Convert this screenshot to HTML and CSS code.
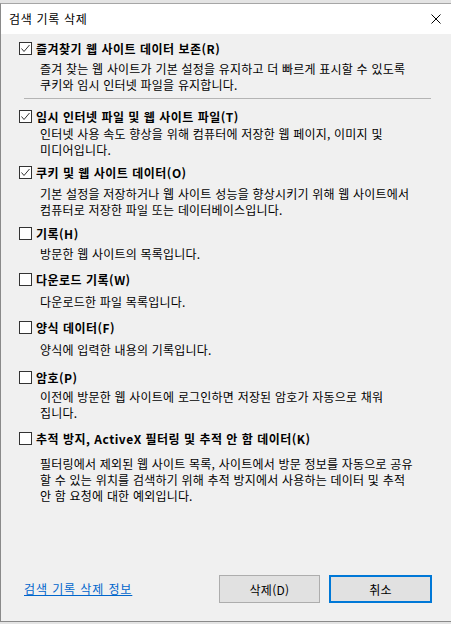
FILE: index.html
```html
<!DOCTYPE html>
<html lang="ko">
<head>
<meta charset="utf-8">
<title>검색 기록 삭제</title>
<link rel="stylesheet" href="styles.css">
</head>
<body>
<div class="window">
  <div class="titlebar">
    <span class="title">검색 기록 삭제</span>
    <svg class="close" width="10" height="10" viewBox="0 0 10 10"><path d="M0.5 0.5L9.5 9.5M9.5 0.5L0.5 9.5" stroke="#000" stroke-width="1"/></svg>
  </div>
  <div class="content">
    <div class="option o1">
      <div class="row">
        <span class="box"><svg width="11" height="11" viewBox="0 0 11 11"><polyline points="1.5,5.5 4,8.5 9.5,2" fill="none" stroke="#333" stroke-width="1"/></svg></span>
        <span class="label">즐겨찾기 웹 사이트 데이터 보존(R)</span>
      </div>
      <p class="desc d1">즐겨 찾는 웹 사이트가 기본 설정을 유지하고 더 빠르게 표시할 수 있도록<br>쿠키와 임시 인터넷 파일을 유지합니다.</p>
    </div>
    <div class="sep"></div>
    <div class="option o2">
      <div class="row">
        <span class="box"><svg width="11" height="11" viewBox="0 0 11 11"><polyline points="1.5,5.5 4,8.5 9.5,2" fill="none" stroke="#333" stroke-width="1"/></svg></span>
        <span class="label">임시 인터넷 파일 및 웹 사이트 파일(T)</span>
      </div>
      <p class="desc d2">인터넷 사용 속도 향상을 위해 컴퓨터에 저장한 웹 페이지, 이미지 및<br>미디어입니다.</p>
    </div>
    <div class="option o3">
      <div class="row">
        <span class="box"><svg width="11" height="11" viewBox="0 0 11 11"><polyline points="1.5,5.5 4,8.5 9.5,2" fill="none" stroke="#333" stroke-width="1"/></svg></span>
        <span class="label">쿠키 및 웹 사이트 데이터(O)</span>
      </div>
      <p class="desc d3">기본 설정을 저장하거나 웹 사이트 성능을 향상시키기 위해 웹 사이트에서<br>컴퓨터로 저장한 파일 또는 데이터베이스입니다.</p>
    </div>
    <div class="option o4">
      <div class="row">
        <span class="box"></span>
        <span class="label">기록(H)</span>
      </div>
      <p class="desc d4">방문한 웹 사이트의 목록입니다.</p>
    </div>
    <div class="option o5">
      <div class="row">
        <span class="box"></span>
        <span class="label">다운로드 기록(W)</span>
      </div>
      <p class="desc d5">다운로드한 파일 목록입니다.</p>
    </div>
    <div class="option o6">
      <div class="row">
        <span class="box"></span>
        <span class="label">양식 데이터(F)</span>
      </div>
      <p class="desc d6">양식에 입력한 내용의 기록입니다.</p>
    </div>
    <div class="option o7">
      <div class="row">
        <span class="box"></span>
        <span class="label">암호(P)</span>
      </div>
      <p class="desc d7">이전에 방문한 웹 사이트에 로그인하면 저장된 암호가 자동으로 채워<br>집니다.</p>
    </div>
    <div class="option o8">
      <div class="row">
        <span class="box"></span>
        <span class="label">추적 방지, ActiveX 필터링 및 추적 안 함 데이터(K)</span>
      </div>
      <p class="desc d8">필터링에서 제외된 웹 사이트 목록, 사이트에서 방문 정보를 자동으로 공유<br>할 수 있는 위치를 검색하기 위해 추적 방지에서 사용하는 데이터 및 추적<br>안 함 요청에 대한 예외입니다.</p>
    </div>
    <div class="footer">
      <a class="link" href="#">검색 기록 삭제 정보</a>
      <div class="buttons">
        <button class="btn btn-delete" type="button">삭제(D)</button>
        <button class="btn btn-cancel" type="button">취소</button>
      </div>
    </div>
  </div>
</div>
</body>
</html>
```
FILE: styles.css
```css
html, body {
  margin: 0;
  padding: 0;
}
body {
  width: 451px;
  height: 624px;
  background: #e4e4e4;
  overflow: hidden;
  font-family: "Noto Sans CJK KR", "Noto Sans", sans-serif;
  font-size: 12px;
  color: #000;
}
.window {
  margin-top: 3px;
  height: 617px;
  border-top: 1px solid #a6a6a6;
  border-left: 1px solid #8a8a8a;
  border-bottom: 1px solid #8a8a8a;
  display: flex;
  flex-direction: column;
  background: #f0f0f0;
}
.titlebar {
  height: 30px;
  background: #fff;
  display: flex;
  align-items: center;
  justify-content: space-between;
  padding: 0 10px 0 8px;
  flex: none;
}
.title {
  font-size: 12px;
  line-height: 16px;
  letter-spacing: 0.7px;
  color: #000;
}
.close {
  display: block;
}
.content {
  flex: 1;
  display: flex;
  flex-direction: column;
  padding-left: 18px;
}
.row {
  display: flex;
  align-items: center;
  height: 13px;
}
.box {
  width: 11px;
  height: 11px;
  border: 1px solid #333;
  background: #fff;
  flex: none;
  display: flex;
}
.box svg {
  display: block;
}
.label {
  margin-left: 4px;
  font-weight: 700;
  line-height: 16px;
  letter-spacing: 0.5px;
  white-space: nowrap;
}
.desc {
  margin: 0 0 0 21px;
  line-height: 16px;
  letter-spacing: 0.2px;
  white-space: nowrap;
}
.sep {
  margin: 5px 0 0 5px;
  width: 407px;
  height: 1px;
  background: #b4b4b4;
}
.o1 { margin-top: 8px; }
.d1 { margin-top: 6px; }
.o2 { margin-top: 11px; }
.d2 { margin-top: 3px; }
.o3 { margin-top: 8px; }
.d3 { margin-top: 7px; }
.o4 { margin-top: 9px; }
.d4 { margin-top: 6px; }
.o5 { margin-top: 11px; }
.d5 { margin-top: 8px; }
.o6 { margin-top: 11px; }
.d6 { margin-top: 8px; }
.o7 { margin-top: 13px; }
.d7 { margin-top: 5px; }
.o8 { margin-top: 11px; }
.d8 { margin-top: 11px; }
.footer {
  margin-top: auto;
  display: flex;
  align-items: center;
  justify-content: space-between;
  padding: 0 19px 18px 5px;
}
.link {
  color: #0066cc;
  text-decoration: underline;
  line-height: 16px;
  letter-spacing: 0.9px;
}
.buttons {
  display: flex;
  gap: 9px;
}
.btn {
  font-family: "Noto Sans CJK KR", "Noto Sans", sans-serif;
  font-size: 12px;
  letter-spacing: 0.3px;
  color: #000;
  background: #e1e1e1;
  height: 28px;
  margin: 0;
  padding: 0;
  box-sizing: border-box;
}
.btn-delete {
  width: 101px;
  border: 1px solid #adadad;
}
.btn-cancel {
  width: 103px;
  border: 2px solid #0078d7;
}
```
